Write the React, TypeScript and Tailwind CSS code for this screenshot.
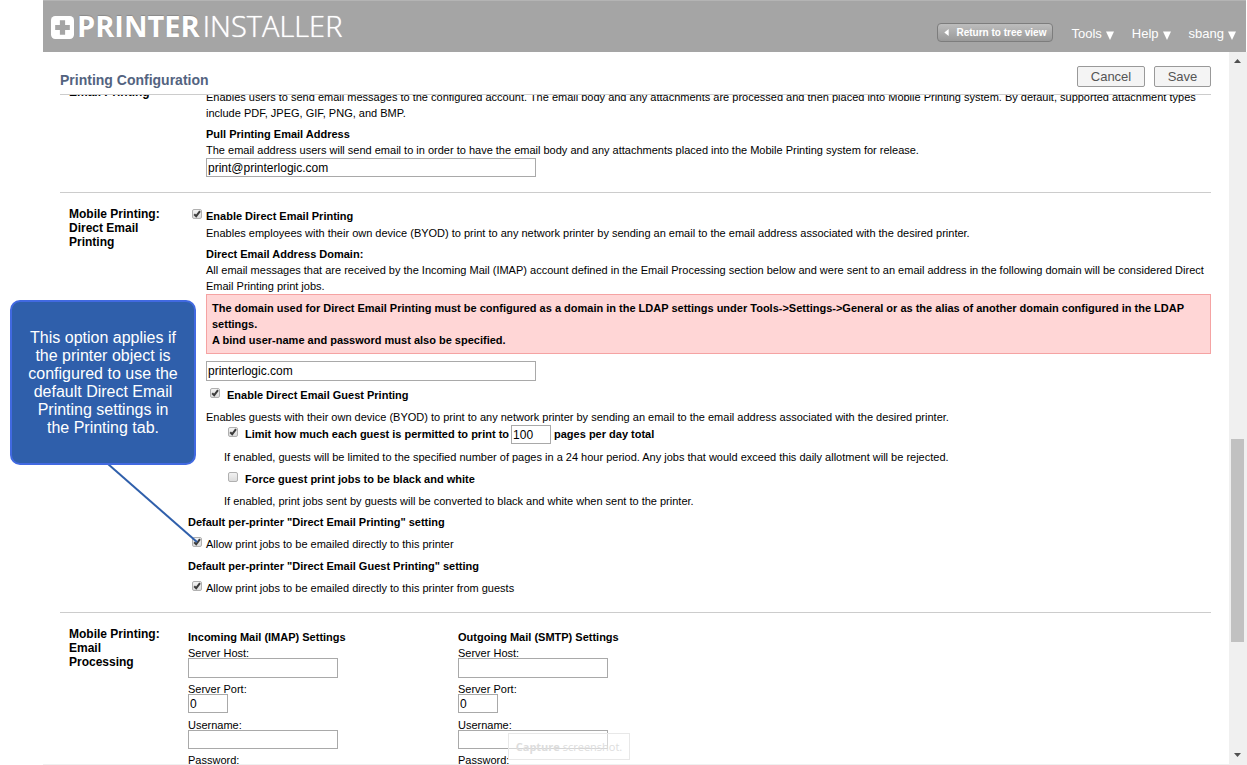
import type { ReactNode } from "react";

function CheckBox({ id, checked }: { id: string; checked?: boolean }) {
  return (
    <span className="mt-px grid size-[10px] shrink-0">
      <input
        id={id}
        type="checkbox"
        defaultChecked={checked}
        className="peer col-start-1 row-start-1 size-[10px] appearance-none rounded-[2px] border border-[#b0b0b0] bg-linear-to-b from-[#f2f2f2] to-[#dcdcdc]"
      />
      <svg
        viewBox="0 0 10 10"
        className="pointer-events-none invisible col-start-1 row-start-1 size-[10px] peer-checked:visible"
        fill="none"
        stroke="#3c3c3c"
        strokeWidth="2"
      >
        <path d="M2.2 5.2 L4.2 7.2 L8 2.2" />
      </svg>
    </span>
  );
}

function CheckRow({
  id,
  checked,
  bold,
  wide,
  children,
}: {
  id: string;
  checked?: boolean;
  bold?: boolean;
  wide?: boolean;
  children: ReactNode;
}) {
  return (
    <div className={`flex pl-1 ${wide ? "gap-[7px]" : "gap-1"} ${bold ? "font-bold" : ""}`}>
      <CheckBox id={id} checked={checked} />
      <label htmlFor={id}>{children}</label>
    </div>
  );
}

const field =
  "block border border-[#a9a9a9] bg-white px-px text-[12px] leading-4 text-black outline-none";

function Section({ title, children }: { title: string; children: ReactNode }) {
  return (
    <section className="grid grid-cols-[128px_1fr] border-b border-[#cccccc] last:border-b-0">
      <h2 className="pt-[14px] pr-6 pl-[9px] text-[12px] leading-[14px] font-bold">{title}</h2>
      <div>{children}</div>
    </section>
  );
}

function MailSettings({ id, title }: { id: string; title: string }) {
  return (
    <fieldset className="w-[270px]">
      <legend className="font-bold">{title}</legend>
      <label htmlFor={`${id}-host`} className="block h-[13px]">
        Server Host:
      </label>
      <input id={`${id}-host`} className={`${field} h-5 w-[150px]`} />
      <label htmlFor={`${id}-port`} className="mt-[3px] block h-[13px]">
        Server Port:
      </label>
      <input id={`${id}-port`} defaultValue="0" className={`${field} h-[19px] w-10`} />
      <label htmlFor={`${id}-user`} className="mt-1 block h-[13px]">
        Username:
      </label>
      <input id={`${id}-user`} className={`${field} h-[19px] w-[150px]`} />
      <span className="mt-[3px] block">Password:</span>
    </fieldset>
  );
}

function Logo() {
  return (
    <a
      href="#"
      aria-label="Printer Installer"
      className="flex items-center font-['Open_Sans',sans-serif] text-[29px] leading-[40px] text-white"
    >
      <svg viewBox="0 0 22 22" className="mt-0.5 mr-[3px] size-[23px]">
        <rect x="0" y="0" width="22" height="22" rx="4" fill="#fff" />
        <path d="M8.5 4h5v4.5H18v5h-4.500V18h-5v-4.500H4v-5h4.500z" fill="#a5a5a5" />
      </svg>
      <span className="font-bold [text-shadow:0_-1px_1px_#8a8a8a]">PRINTER</span>
      <span className="ml-[3px] font-light [text-shadow:0_0_1px_#ffffff]">INSTALLER</span>
    </a>
  );
}

function MenuButton({ children }: { children: ReactNode }) {
  return (
    <button className="flex items-center gap-1">
      {children}
      <svg viewBox="0 0 8 9" className="mt-0.5 h-[9px] w-2">
        <path d="M0 0.500h8L4 9z" fill="#fff" />
      </svg>
    </button>
  );
}

function Header() {
  return (
    <header className="mr-px flex h-[52px] shrink-0 items-start border-t border-[#b4b4b4] bg-[#a5a5a5] pr-[10px] pl-2">
      <div className="mt-[5px]">
        <Logo />
      </div>
      <nav className="mt-[22px] ml-auto flex items-start gap-[18px] text-[13px] leading-[22px] text-white [text-shadow:0_-1px_1px_#808080]">
        <button className="flex h-[19px] items-center rounded-[4px] border border-[#7d7d7d] bg-linear-to-b from-[#bdbdbd] to-[#999999] px-1.5 text-[10px] leading-[17px] font-bold">
          <svg viewBox="0 0 5 8" className="mr-[7px] h-[7px] w-[5px]">
            <path d="M5 0v8L0 4z" fill="#fff" />
          </svg>
          Return to tree view
        </button>
        <MenuButton>Tools</MenuButton>
        <MenuButton>Help</MenuButton>
        <MenuButton>sbang</MenuButton>
      </nav>
    </header>
  );
}

function ScrollTrack() {
  return (
    <div className="flex w-[18px] shrink-0 flex-col bg-[#f0f0f0] pr-[3px] pl-0.5">
      <svg viewBox="0 0 13 17" className="h-[17px] w-[13px]">
        <path d="M3 11h7L6.500 7z" fill="#505050" />
      </svg>
      <div className="flex-[370]" />
      <div className="flex-[203] bg-[#c1c1c1]" />
      <div className="flex-[105]" />
      <svg viewBox="0 0 13 17" className="h-[17px] w-[13px]">
        <path d="M3 6h7L6.500 10z" fill="#505050" />
      </svg>
    </div>
  );
}

const actionButton =
  "h-[21px] rounded-[2px] border border-[#999999] bg-[#f4f4f4] text-[13px] leading-[18px] text-[#555555]";

export default function App() {
  return (
    <div className="relative flex h-screen flex-col overflow-hidden bg-white pl-[43px] font-['Liberation_Sans',Arial,sans-serif] text-[11px] leading-4 text-black">
      <Header />
      <div className="flex min-h-0 flex-1 border-b border-[#f0f0f0]">
        <main className="flex min-w-0 flex-1 flex-col pr-[18px] pl-[17px]">
          <div className="flex h-[43px] shrink-0 items-start border-b border-[#cccccc]">
            <h1 className="mt-[18px] text-[14px] leading-5 font-bold text-[#53637f]">
              Printing Configuration
            </h1>
            <div className="mt-[14px] ml-auto flex gap-[9px]">
              <button className={`${actionButton} w-[68px]`}>Cancel</button>
              <button className={`${actionButton} w-[57px]`}>Save</button>
            </div>
          </div>

          <div className="min-h-0 flex-1 overflow-hidden">
            <div className="-mt-6">
              <Section title="Email Printing">
                <div className="pt-[18px] pb-[15px] pl-[18px]">
                  <p>
                    Enables users to send email messages to the configured account. The email body
                    and any attachments are processed and then placed into Mobile Printing system.
                    By default, supported attachment types include PDF, JPEG, GIF, PNG, and BMP.
                  </p>
                  <label htmlFor="pull-address" className="mt-[5px] block font-bold">
                    Pull Printing Email Address
                  </label>
                  <p>
                    The email address users will send email to in order to have the email body and
                    any attachments placed into the Mobile Printing system for release.
                  </p>
                  <input
                    id="pull-address"
                    defaultValue="print@printerlogic.com"
                    className={`${field} h-[19px] w-[330px]`}
                  />
                </div>
              </Section>

              <Section title="Mobile Printing: Direct Email Printing">
                <div className="pt-[15px] pb-4">
                  <CheckRow id="direct" checked bold>
                    Enable Direct Email Printing
                  </CheckRow>
                  <div className="pl-[18px]">
                    <p className="mt-px">
                      Enables employees with their own device (BYOD) to print to any network printer
                      by sending an email to the email address associated with the desired printer.
                    </p>
                    <label htmlFor="domain" className="mt-[5px] block font-bold">
                      Direct Email Address Domain:
                    </label>
                    <p>
                      All email messages that are received by the Incoming Mail (IMAP) account
                      defined in the Email Processing section below and were sent to an email
                      address in the following domain will be considered Direct Email Printing print
                      jobs.
                    </p>
                    <p className="border border-[#f5a3a3] bg-[#ffd6d6] p-[5px] font-bold">
                      The domain used for Direct Email Printing must be configured as a domain in
                      the LDAP settings under Tools-&gt;Settings-&gt;General or as the alias of
                      another domain configured in the LDAP settings.
                      <br />A bind user-name and password must also be specified.
                    </p>
                    <input
                      id="domain"
                      defaultValue="printerlogic.com"
                      className={`${field} mt-[7px] mb-1.5 h-5 w-[330px]`}
                    />
                    <CheckRow id="guest" checked bold wide>
                      Enable Direct Email Guest Printing
                    </CheckRow>
                    <p className="mt-1.5">
                      Enables guests with their own device (BYOD) to print to any network printer by
                      sending an email to the email address associated with the desired printer.
                    </p>
                    <div className="pl-[18px]">
                      <div className="flex h-[19px] items-start pt-px font-bold">
                        <CheckRow id="limit" checked bold wide>
                          Limit how much each guest is permitted to print to
                        </CheckRow>
                        <input
                          aria-label="Pages per day"
                          defaultValue="100"
                          className={`${field} -mt-px mr-[3px] ml-0.5 h-[19px] w-10 font-normal`}
                        />
                        <label htmlFor="limit">pages per day total</label>
                      </div>
                      <p className="mt-[5px]">
                        If enabled, guests will be limited to the specified number of pages in a 24
                        hour period. Any jobs that would exceed this daily allotment will be
                        rejected.
                      </p>
                      <div className="mt-1.5">
                        <CheckRow id="mono" bold wide>
                          Force guest print jobs to be black and white
                        </CheckRow>
                      </div>
                      <p className="mt-1.5">
                        If enabled, print jobs sent by guests will be converted to black and white
                        when sent to the printer.
                      </p>
                    </div>
                  </div>
                  <h3 className="mt-[5px] mb-1.5 font-bold">
                    Default per-printer "Direct Email Printing" setting
                  </h3>
                  <CheckRow id="allow" checked>
                    Allow print jobs to be emailed directly to this printer
                  </CheckRow>
                  <h3 className="my-1.5 font-bold">
                    Default per-printer "Direct Email Guest Printing" setting
                  </h3>
                  <CheckRow id="allow-guest" checked>
                    Allow print jobs to be emailed directly to this printer from guests
                  </CheckRow>
                </div>
              </Section>

              <Section title="Mobile Printing: Email Processing">
                <div className="flex pt-4">
                  <MailSettings id="imap" title="Incoming Mail (IMAP) Settings" />
                  <MailSettings id="smtp" title="Outgoing Mail (SMTP) Settings" />
                </div>
              </Section>
            </div>
          </div>
        </main>
        <ScrollTrack />
      </div>

      <svg
        viewBox="0 0 95 85"
        className="pointer-events-none absolute top-[462px] left-[105px] h-[85px] w-[95px]"
      >
        <path d="M3 2L92 80" stroke="#2f5fab" strokeWidth="2" />
      </svg>
      <aside className="absolute top-[300px] left-[10px] flex h-[165px] w-[186px] items-center justify-center rounded-[10px] border-2 border-[#4169e1] bg-[#2f5fab] px-4 text-center text-[16px] leading-[18px] text-white">
        This option applies if the printer object is configured to use the default Direct Email
        Printing settings in the Printing tab.
      </aside>
      <div className="absolute top-[733px] left-[508px] h-[27px] w-[122px] border border-[#e8e8e8] bg-white/50 text-center font-['Open_Sans',sans-serif] text-[11px] leading-[26px] text-[#dddddd]">
        <b>Capture</b> screenshot.
      </div>
    </div>
  );
}
